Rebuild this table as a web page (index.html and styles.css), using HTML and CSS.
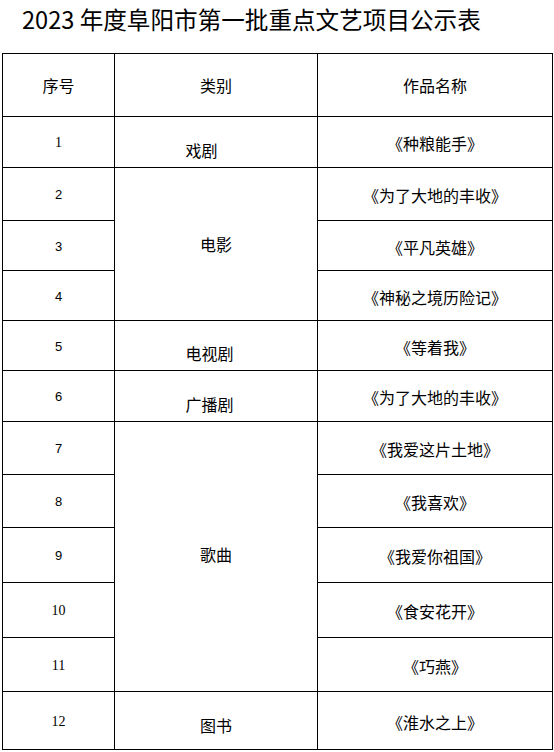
FILE: index.html
```html
<!DOCTYPE html>
<html lang="zh-CN">
<head>
<meta charset="utf-8">
<title>2023 年度阜阳市第一批重点文艺项目公示表</title>
<link rel="stylesheet" href="styles.css">
</head>
<body>
<h1 class="title">2023 年度阜阳市第一批重点文艺项目公示表</h1>
<table class="list">
  <colgroup>
    <col class="c-no">
    <col class="c-cat">
    <col class="c-name">
  </colgroup>
  <tr class="h63">
    <td class="hd">序号</td>
    <td class="hd">类别</td>
    <td class="hd">作品名称</td>
  </tr>
  <tr class="h51">
    <td class="no serif">1</td>
    <td class="cat shift-2">戏剧</td>
    <td class="name">《种粮能手》</td>
  </tr>
  <tr class="h53">
    <td class="no">2</td>
    <td class="cat" rowspan="3">电影</td>
    <td class="name">《为了大地的丰收》</td>
  </tr>
  <tr class="h50">
    <td class="no">3</td>
    <td class="name">《平凡英雄》</td>
  </tr>
  <tr class="h50">
    <td class="no">4</td>
    <td class="name">《神秘之境历险记》</td>
  </tr>
  <tr class="h50">
    <td class="no">5</td>
    <td class="cat shift-1">电视剧</td>
    <td class="name">《等着我》</td>
  </tr>
  <tr class="h51">
    <td class="no">6</td>
    <td class="cat shift-1">广播剧</td>
    <td class="name">《为了大地的丰收》</td>
  </tr>
  <tr class="h53">
    <td class="no">7</td>
    <td class="cat up" rowspan="5">歌曲</td>
    <td class="name">《我爱这片土地》</td>
  </tr>
  <tr class="h53">
    <td class="no">8</td>
    <td class="name">《我喜欢》</td>
  </tr>
  <tr class="h55">
    <td class="no">9</td>
    <td class="name">《我爱你祖国》</td>
  </tr>
  <tr class="h55">
    <td class="no serif">10</td>
    <td class="name">《食安花开》</td>
  </tr>
  <tr class="h54">
    <td class="no serif">11</td>
    <td class="name">《巧燕》</td>
  </tr>
  <tr class="h58">
    <td class="no serif">12</td>
    <td class="cat down">图书</td>
    <td class="name">《淮水之上》</td>
  </tr>
</table>
</body>
</html>
```
FILE: styles.css
```css
html, body {
  margin: 0;
  padding: 0;
  background: #ffffff;
}

body {
  font-family: "Noto Sans CJK SC", "Noto Sans", sans-serif;
  color: #000000;
}

.title {
  margin: 0;
  padding-left: 22px;
  height: 53px;
  line-height: 38px;
  font-size: 23.6px;
  font-weight: 400;
  letter-spacing: 0;
  white-space: nowrap;
}

.list {
  margin-left: 2px;
  border-collapse: collapse;
  table-layout: fixed;
  width: 550px;
}

.c-no { width: 112px; }
.c-cat { width: 203px; }
.c-name { width: 235px; }

.list td {
  border: 1px solid #000000;
  padding: 0;
  text-align: center;
  vertical-align: middle;
  font-size: 16px;
  line-height: 20px;
}

.h63 { height: 63px; }
.h58 { height: 58px; }
.h55 { height: 55px; }
.h54 { height: 54px; }
.h53 { height: 53px; }
.h51 { height: 51px; }
.h50 { height: 50px; }

.list td.no {
  font-family: "Liberation Sans", "DejaVu Sans", sans-serif;
  font-size: 13px;
  padding-top: 2px;
}

.list td.no.serif {
  font-family: "Liberation Serif", "DejaVu Serif", serif;
  font-size: 14px;
}

.list td.name {
  padding-top: 2px;
}

.list td.shift-2 {
  padding-top: 15px;
  padding-right: 29px;
}

.list td.shift-1 {
  padding-top: 15px;
  padding-right: 13px;
}

.list td.up {
  padding-bottom: 6px;
}

.list td.down {
  padding-top: 8px;
}
```
